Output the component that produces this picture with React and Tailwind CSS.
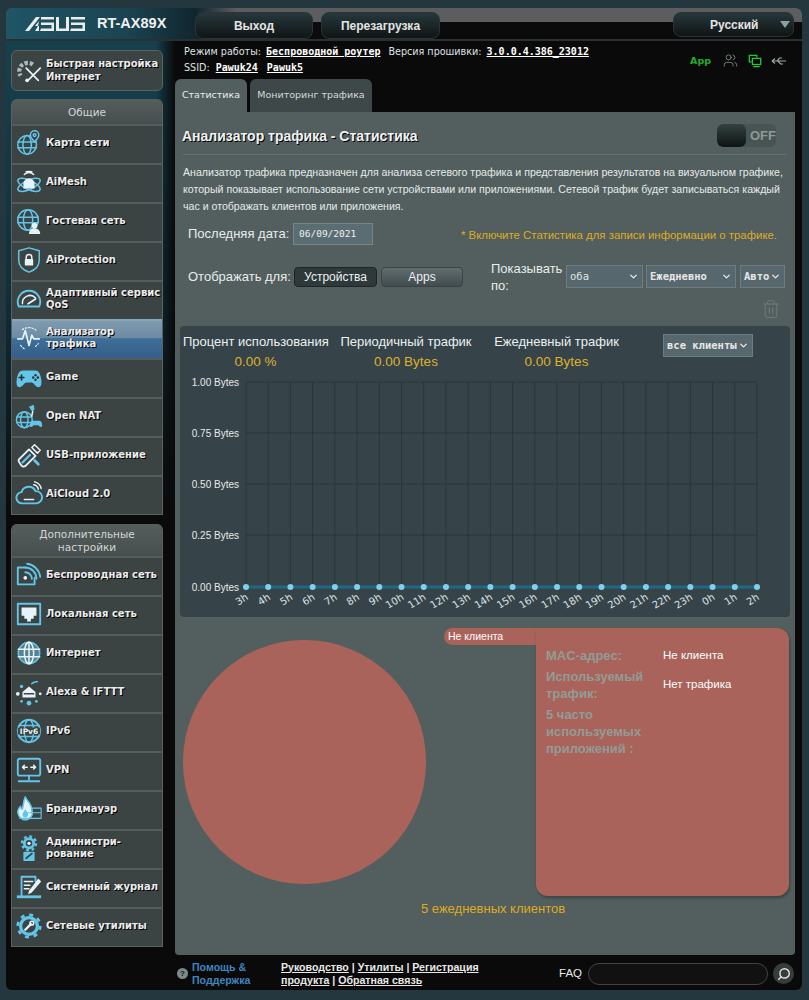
import { ChevronDown, Search, Trash2, Users } from 'lucide-react';

const B = '#62c6ea';
const W = '#e6f4f9';

function Ic({ children }) {
  return (
    <svg viewBox="0 0 30 30" className="h-[28px] w-[28px] shrink-0" fill="none" stroke={B} strokeWidth="1.6" strokeLinecap="round" strokeLinejoin="round">
      {children}
    </svg>
  );
}

const icons = {
  wizard: (
    <Ic>
      <path d="M19 8A9 9 0 0 0 6 20" stroke="#a9bcc4" strokeWidth="4.500" strokeDasharray="3.500 2" strokeLinecap="butt" />
      <path d="M12 12l13 13" stroke={W} strokeWidth="1.800" />
      <path d="M27 12L15 24" stroke={W} strokeWidth="1.800" />
      <circle cx="13" cy="25" r="2" fill={W} stroke="none" />
    </Ic>
  ),
  map: (
    <Ic>
      <circle cx="13" cy="17" r="10" />
      <ellipse cx="13" cy="17" rx="4.5" ry="10" />
      <path d="M3 14h20M3 20h20" />
      <path d="M21 2a4.5 4.5 0 0 1 4.500 4.500c0 3-4.500 7-4.500 7s-4.500-4-4.500-7A4.500 4.500 0 0 1 21 2z" fill="#3c4343" />
      <circle cx="21" cy="6.500" r="1.500" />
    </Ic>
  ),
  mesh: (
    <Ic>
      <ellipse cx="15" cy="18" rx="13" ry="5" transform="rotate(25 15 18)" />
      <ellipse cx="15" cy="18" rx="13" ry="5" transform="rotate(-25 15 18)" />
      <path d="M9 22v-5a6 6 0 0 1 12 0v5z" fill={W} stroke="none" />
      <path d="M10 7a7 7 0 0 1 10 0M12 4a10 6 0 0 1 6 0" stroke={W} />
    </Ic>
  ),
  guest: (
    <Ic>
      <circle cx="14" cy="14" r="11" />
      <ellipse cx="14" cy="14" rx="5" ry="11" />
      <path d="M3 11h22M3 17h22" />
      <circle cx="21" cy="20" r="3" fill={W} stroke="none" />
      <path d="M15 29c0-4 2-6 6-6s6 2 6 6z" fill={W} stroke="none" />
    </Ic>
  ),
  shield: (
    <Ic>
      <path d="M15 2l11 3v10c0 7-5 11-11 13C9 26 4 22 4 15V5z" />
      <rect x="10.500" y="14" width="9" height="7" rx="1" fill={W} stroke="none" />
      <path d="M12 14v-2a3 3 0 0 1 6 0v2" stroke={W} />
    </Ic>
  ),
  qos: (
    <Ic>
      <path d="M4 23a12 12 0 1 1 22 0z" strokeWidth="2" />
      <path d="M8 20a8 8 0 0 1 14-6" stroke={W} />
      <path d="M14 20l8-5" stroke={W} strokeWidth="2" />
    </Ic>
  ),
  traffic: (
    <Ic>
      <path d="M3 16h5l3-9 4 16 3-11 2 4h6" stroke={W} strokeWidth="1.800" />
      <path d="M8 6a12 12 0 0 1 15 1M6 23a12 12 0 0 0 5 4M22 24l3-3" stroke={W} strokeWidth="1.300" strokeDasharray="1.500 2" />
    </Ic>
  ),
  game: (
    <Ic>
      <path d="M8 8h14c3 0 5 3 6 9s0 9-3 9-4-4-7-5h-6c-3 1-4 5-7 5s-4-3-3-9 3-9 6-9z" fill={B} stroke="none" />
      <path d="M7 13v5M4.500 15.500h5" stroke="#2b3232" strokeWidth="1.800" />
      <circle cx="22" cy="13" r="1.300" fill="#2b3232" stroke="none" />
      <circle cx="22" cy="18" r="1.300" fill="#2b3232" stroke="none" />
      <circle cx="19.500" cy="15.500" r="1.300" fill="#2b3232" stroke="none" />
      <circle cx="24.500" cy="15.500" r="1.300" fill="#2b3232" stroke="none" />
    </Ic>
  ),
  nat: (
    <Ic>
      <circle cx="10" cy="19" r="8.500" />
      <ellipse cx="10" cy="19" rx="4" ry="8.500" />
      <path d="M2 16h16M2 22h16" />
      <path d="M15 5l5-2 1 5-3 2z" fill={B} stroke="none" />
      <path d="M19 10l-1 5" stroke={W} />
      <path d="M19 20h7c2 0 3 2 3 5s-2 2-4 0h-5c-2 2-4 3-4 0s1-5 3-5z" fill={B} stroke="none" />
    </Ic>
  ),
  usb: (
    <Ic>
      <path d="M4 20L15 9l7 7-11 11c-2 1-4 0-5-2s-3-3-2-5z" stroke={W} strokeWidth="2" />
      <path d="M8 23l8-8" stroke={B} strokeWidth="2.500" />
      <path d="M18 7l3-3 6 6-3 3z" stroke={W} />
      <path d="M21 21l4 4" stroke={B} strokeWidth="3" />
    </Ic>
  ),
  cloud: (
    <Ic>
      <path d="M8 25a6 6 0 0 1-1-12 8 8 0 0 1 15-1 6.500 6.500 0 0 1 1 13z" strokeWidth="2" />
      <path d="M20 5a6 6 0 0 1 5 5M21 2a9 9 0 0 1 7 7" stroke={W} />
      <path d="M10 21h10" stroke={W} strokeDasharray="2 1" />
    </Ic>
  ),
  wifi: (
    <Ic>
      <path d="M11 7H3v18h18v-7" strokeWidth="2" />
      <circle cx="11" cy="18" r="2" fill={W} stroke="none" />
      <path d="M11 12a7 7 0 0 1 7 7M11 7a12 12 0 0 1 12 12M13 3a16 16 0 0 1 14 14" strokeWidth="2" />
    </Ic>
  ),
  lan: (
    <Ic>
      <rect x="3" y="4" width="24" height="22" strokeWidth="2" />
      <path d="M7 8h16v9h-3v3h-3v3h-4v-3h-3v-3H7z" fill={W} stroke="none" />
    </Ic>
  ),
  net: (
    <Ic>
      <circle cx="15" cy="15" r="11.500" fill="#58808f" />
      <ellipse cx="15" cy="15" rx="5" ry="11.500" stroke={W} />
      <path d="M3.500 11h23M3.500 19h23M15 3.500v23" stroke={W} />
    </Ic>
  ),
  alexa: (
    <Ic>
      <path d="M8 15l7-6 7 6v6H8z" fill={W} stroke="none" />
      <path d="M10 17h10" stroke="#3c4343" />
      <path d="M18 6a8 8 0 0 1 6-2" />
      <circle cx="3" cy="17" r="2" fill={W} stroke="none" />
      <circle cx="27" cy="17" r="1.500" fill={W} stroke="none" />
      <circle cx="15" cy="27" r="2.500" fill={B} stroke="none" />
      <circle cx="7" cy="9" r="1.800" fill={B} stroke="none" />
      <circle cx="7" cy="25" r="1.500" fill={B} stroke="none" />
      <circle cx="23" cy="25" r="1.500" fill={B} stroke="none" />
    </Ic>
  ),
  ipv6: (
    <Ic>
      <circle cx="15" cy="15" r="12" strokeWidth="2" />
      <ellipse cx="15" cy="15" rx="5" ry="12" />
      <path d="M4 9h22M4 21h22" />
      <rect x="3" y="11.500" width="24" height="7" fill="#3c4343" stroke="none" />
      <text x="15" y="18" textAnchor="middle" fontSize="8" fontWeight="700" fill={W} stroke="none" fontFamily="DejaVu Sans">IPv6</text>
    </Ic>
  ),
  vpn: (
    <Ic>
      <rect x="3" y="3" width="24" height="18" rx="2" strokeWidth="2" />
      <path d="M8 12h5M8 12l2-2M8 12l2 2M22 12h-5M22 12l-2-2M22 12l-2 2" stroke={W} />
      <path d="M15 21v4M4 27h22" strokeWidth="2" />
    </Ic>
  ),
  fire: (
    <Ic>
      <path d="M11 2c1 4 7 7 7 14a7 7 0 0 1-14 6c-2-4 0-8 2-10 0 2 1 3 2 3 1-4 1-9 3-13z" fill={W} stroke={B} />
      <path d="M11 15c2 3 3 4 3 6a3 3 0 0 1-6 0c0-2 2-3 3-6z" fill={B} stroke="none" />
      <path d="M18 14h10v5H18zM14 19h14v6H5" strokeWidth="1.200" />
    </Ic>
  ),
  admin: (
    <Ic>
      <circle cx="15" cy="10" r="7.500" strokeWidth="2.500" strokeDasharray="3 2.900" strokeLinecap="butt" />
      <circle cx="15" cy="10" r="5" strokeWidth="3" />
      <circle cx="15" cy="10" r="1.800" fill={W} stroke="none" />
      <rect x="9" y="19" width="12" height="10" rx="1" fill={B} stroke="none" />
      <path d="M12 26l6-5" stroke="#3c4343" strokeWidth="2" />
    </Ic>
  ),
  log: (
    <Ic>
      <path d="M7 4h15M7 4v20M22 4v5" strokeWidth="2" />
      <path d="M10 9h9M10 13h6M10 17h5" stroke={W} />
      <path d="M25 6L15 19l-1 4 4-2L28 9z" fill={W} stroke="none" />
      <path d="M2 24h26v3H2z" fill={B} stroke="none" />
    </Ic>
  ),
  tools: (
    <Ic>
      <circle cx="15" cy="15" r="12" strokeWidth="3" strokeDasharray="4.200 5.200" strokeLinecap="butt" />
      <circle cx="15" cy="15" r="9" strokeWidth="3.500" />
      <path d="M11 19l6-6" stroke={W} strokeWidth="2.500" />
      <circle cx="18" cy="12" r="2" stroke={W} />
    </Ic>
  ),
};

function NavItem({ icon, label, active }) {
  return (
    <div className={`flex h-[39px] items-center gap-[3px] border-t-2 pb-[3px] pl-[3px] ${active ? 'border-[#8aa3b5] bg-[linear-gradient(#7f9bb0,#6d8ba3_45%,#3f6e98_48%,#335f8a)]' : 'border-[#555c5c] bg-[#3c4343]'}`}>
      {icons[icon]}
      <span className="font-['DejaVu_Sans'] text-[10px] leading-[12.500px] font-bold text-[#ececec] [text-shadow:1px_1px_0_#000]">{label}</span>
    </div>
  );
}

function NavGroup({ title, items, tall }) {
  return (
    <div className="overflow-hidden rounded-t-md border-x border-b border-[#5a6161] bg-[#3c4343]">
      <div className={`flex items-center justify-center bg-[linear-gradient(#565d5d,#474e4e)] pt-[2px] text-center font-['DejaVu_Sans'] text-[10.500px] leading-[13px] text-[#d2d6d6] ${tall ? 'h-[32px]' : 'h-[25px]'}`}>
        {title}
      </div>
      {items.map(it => <NavItem key={it.label} {...it} />)}
    </div>
  );
}

const general = [
  { icon: 'map', label: 'Карта сети' },
  { icon: 'mesh', label: 'AiMesh' },
  { icon: 'guest', label: 'Гостевая сеть' },
  { icon: 'shield', label: 'AiProtection' },
  { icon: 'qos', label: 'Адаптивный сервис QoS' },
  { icon: 'traffic', label: 'Анализатор трафика', active: true },
  { icon: 'game', label: 'Game' },
  { icon: 'nat', label: 'Open NAT' },
  { icon: 'usb', label: 'USB-приложение' },
  { icon: 'cloud', label: 'AiCloud 2.0' },
];

const advanced = [
  { icon: 'wifi', label: 'Беспроводная сеть' },
  { icon: 'lan', label: 'Локальная сеть' },
  { icon: 'net', label: 'Интернет' },
  { icon: 'alexa', label: 'Alexa & IFTTT' },
  { icon: 'ipv6', label: 'IPv6' },
  { icon: 'vpn', label: 'VPN' },
  { icon: 'fire', label: 'Брандмауэр' },
  { icon: 'admin', label: 'Администри-рование' },
  { icon: 'log', label: 'Системный журнал' },
  { icon: 'tools', label: 'Сетевые утилиты' },
];

function HeadBtn({ children, className }) {
  return (
    <div className={`flex items-center justify-center rounded-lg border border-[#2a3336] bg-[linear-gradient(#27383c,#101414)] text-[12px] font-bold text-[#e4e4e4] ${className}`}>
      {children}
    </div>
  );
}

function Sel({ label, className, bold }) {
  return (
    <div className={`flex h-[23px] items-center justify-between border border-[#6d7d80] bg-[#56686d] pr-[3px] pl-[3px] font-['DejaVu_Sans_Mono'] text-[10.500px] text-[#e6e6e6] ${bold ? 'font-bold' : ''} ${className}`}>
      {label}
      <ChevronDown size={11} strokeWidth={3} color="#e6e6e6" />
    </div>
  );
}

const hours = ['3h', '4h', '5h', '6h', '7h', '8h', '9h', '10h', '11h', '12h', '13h', '14h', '15h', '16h', '17h', '18h', '19h', '20h', '21h', '22h', '23h', '0h', '1h', '2h'];
const yLabels = [
  ['1.00 Bytes', 12],
  ['0.75 Bytes', 63],
  ['0.50 Bytes', 114],
  ['0.25 Bytes', 165],
  ['0.00 Bytes', 217],
];

function Chart() {
  const x0 = 66;
  const step = 511 / 23;
  return (
    <svg width="610" height="247" className="block">
      {yLabels.map(([t, y]) => (
        <g key={t}>
          <line x1={x0} x2={x0 + 511} y1={y} y2={y} stroke="#2a353a" />
          <text x="59" y={y + 3.500} textAnchor="end" fontSize="10" fontFamily="Liberation Sans" fill="#e8e8e8">{t}</text>
        </g>
      ))}
      {hours.map((h, i) => (
        <g key={h}>
          <line x1={x0 + i * step} x2={x0 + i * step} y1="12" y2="217" stroke="#2a353a" />
          <text transform={`translate(${x0 + i * step + 3} 229) rotate(-32)`} textAnchor="end" fontSize="10" fontFamily="DejaVu Sans" fill="#dfe3e3">{h}</text>
        </g>
      ))}
      <line x1={x0} x2={x0 + 511} y1="217" y2="217" stroke="#1f6a82" strokeWidth="3" />
      {hours.map((h, i) => <circle key={h} cx={x0 + i * step} cy="217" r="3" fill="#7ed0ee" />)}
    </svg>
  );
}

function Stat({ label, value, className }) {
  return (
    <div className={`text-center ${className}`}>
      <div className="text-[13px] leading-[16px] whitespace-nowrap text-[#eaf0f0]">{label}</div>
      <div className="mt-[4px] text-[13.500px] leading-[16px] text-[#dfb12a]">{value}</div>
    </div>
  );
}

export default function App() {
  return (
    <div className="h-[1000px] overflow-hidden bg-[#24363e] pt-[8px] pl-[6px] font-['Liberation_Sans',sans-serif]">
      <div className="h-[982px] w-[796px] overflow-hidden rounded-md bg-[#0a0a0a]">
        {/* header */}
        <div className="flex h-[33px] items-start border-b-2 border-[#2a2f31] bg-[linear-gradient(90deg,#1f5566,#1b4451_120px,#10262e_190px,transparent_230px),linear-gradient(#5b5d5e_14px,#0b0b0b_14px)]">
          <div className="flex w-[189px] items-center pt-[5px] pl-[19px]">
            <svg width="60" height="14" viewBox="0 0 60 14" fill="#ececec">
              <path d="M0 14L11 0h4L4 14zM14 4l-4 5h4v5h-4l3-5z" />
              <path d="M16 0h13v2.500H16zM16 5.500h13v8.500H15l1-2.500h10.500v-3.500H16zM31 0h3v14h-3zM31 11.500h13V14H31zM41 0h3v14h-3zM46 0h14v2.500H46zM46 5.500h14V14H45l1-2.500h11.500V8H46z" />
            </svg>
            <span className="ml-[12px] text-[14.500px] font-bold whitespace-nowrap text-[#f0f0f0]">RT-AX89X</span>
          </div>
          <HeadBtn className="mt-[4px] h-[27px] w-[118px]">Выход</HeadBtn>
          <HeadBtn className="mt-[4px] ml-[8px] h-[27px] w-[119px]">Перезагрузка</HeadBtn>
          <div className="mt-[4px] ml-[233px] flex h-[25px] w-[121px] items-center justify-between rounded-lg border border-[#2a3336] bg-[linear-gradient(#27383c,#101414)] pr-[3px] pl-[36px] text-[12px] font-bold text-[#e4e4e4]">
            Русский
            <span className="h-0 w-0 border-x-[5px] border-t-[7px] border-x-transparent border-t-[#8aa0a8]" />
          </div>
        </div>

        <div className="flex">
          {/* sidebar */}
          <div className="w-[169px] shrink-0 bg-[linear-gradient(90deg,transparent_150px,#0a0a0a_169px),linear-gradient(#17404d,#10303b_250px,#0a0a0a_480px)] pt-[9px] pl-[5px]">
            <div className="flex h-[41px] w-[152px] items-center gap-[3px] rounded-md border border-[#5a6161] bg-[#3c4343] pl-[3px]">
              {icons.wizard}
              <span className="font-['DejaVu_Sans'] text-[10px] leading-[12.500px] font-bold text-[#ececec] [text-shadow:1px_1px_0_#000]">Быстрая настройка Интернет</span>
            </div>
            <div className="mt-[8px] w-[152px]">
              <NavGroup title="Общие" items={general} />
            </div>
            <div className="mt-[9px] w-[152px]">
              <NavGroup title="Дополнительные настройки" items={advanced} tall />
            </div>
          </div>

          {/* main */}
          <div className="w-[620px] shrink-0">
            <div className="flex h-[38px] justify-between pt-[3px] pl-[9px] font-['DejaVu_Sans'] text-[9.600px] leading-[16px] text-[#dfe3e3]">
              <div>
                <div className="whitespace-nowrap">
                  Режим работы: <span className="ml-[2px] font-['DejaVu_Sans_Mono'] text-[10px] font-bold text-white underline">Беспроводной роутер</span>
                  <span className="ml-[8px]">Версия прошивки: </span><span className="ml-[2px] font-['DejaVu_Sans_Mono'] text-[10px] font-bold text-white underline">3.0.0.4.386_23012</span>
                </div>
                <div className="whitespace-nowrap">
                  SSID: <span className="ml-[3px] font-['DejaVu_Sans_Mono'] text-[10px] font-bold text-white underline">Pawuk24</span>
                  <span className="ml-[9px] font-['DejaVu_Sans_Mono'] text-[10px] font-bold text-white underline">Pawuk5</span>
                </div>
              </div>
              <div className="flex items-center pr-[8px] pb-[2px]">
                <span className="text-[9.500px] font-bold text-[#1fae2e]">App</span>
                <Users size={15} strokeWidth={1.300} color="#8a9494" className="ml-[12px]" />
                <svg width="14" height="16" viewBox="0 0 16 16" fill="none" stroke="#23c53a" strokeWidth="1.500" className="ml-[10px]">
                  <path d="M4 9H1.500V1.500H10V4" />
                  <rect x="5" y="5" width="9.500" height="7" />
                  <path d="M6 14.500h7.500" />
                </svg>
                <svg width="16" height="16" viewBox="0 0 16 16" fill="none" stroke="#9aa4a4" strokeWidth="1.200" className="ml-[9px]">
                  <path d="M1 8h14M1 8l3-2.500M1 8l3 2.500M6 8l2.500-3H11M7 8l2.500 3H12" />
                </svg>
              </div>
            </div>

            {/* tabs */}
            <div className="flex h-[33px] gap-[3px] font-['DejaVu_Sans'] text-[9.500px]">
              <div className="flex w-[72px] items-center justify-center rounded-t-md bg-[#525f5e] text-[#e8ecec]">Статистика</div>
              <div className="flex w-[122px] items-center justify-center rounded-t-md bg-[#3e4848] text-[#d4d9d9]">Мониторинг трафика</div>
            </div>

            {/* panel */}
            <div className="h-[843px] rounded-b-sm bg-[#525f5e] px-[8px]">
              <div className="flex h-[43px] items-center justify-between border-b border-[#667271] pt-[5px] pr-[11px]">
                <span className="mt-[2px] -ml-[1px] text-[14px] font-bold text-[#f2f2f2] [text-shadow:1px_1px_0_#000]">Анализатор трафика - Статистика</span>
                <div className="flex h-[23px] w-[59px] overflow-hidden rounded-md bg-[#485453]">
                  <div className="h-full w-[29px] rounded-md bg-[linear-gradient(#33423f,#0e1414)]" />
                  <span className="ml-[4px] self-center text-[13px] font-bold text-[#8d9a9a]">OFF</span>
                </div>
              </div>

              <p className="pt-[9px] text-[10.600px] leading-[17px] text-[#e6eaea]">
                Анализатор трафика предназначен для анализа сетевого трафика и представления результатов на визуальном графике, который показывает использование сети устройствами или приложениями. Сетевой трафик будет записываться каждый час и отображать клиентов или приложения.
              </p>

              <div className="mt-[8px] flex h-[22px] items-center pl-[5px]">
                <span className="w-[100px] text-[13px] whitespace-nowrap text-[#e8ecec]">Последняя дата:</span>
                <div className="ml-[5px] flex h-[22px] w-[80px] items-center border border-[#75868a] bg-[#5a6d72] pl-[5px] font-['DejaVu_Sans_Mono'] text-[9.500px] text-[#eef0f0]">06/09/2021</div>
                <span className="mt-[4px] ml-auto pr-[10px] text-[11.400px] text-[#dfab1e]">* Включите Статистика для записи информации о трафике.</span>
              </div>

              <div className="mt-[20px] flex h-[23px] items-center pl-[5px]">
                <span className="w-[102px] text-[13px] whitespace-nowrap text-[#e8ecec]">Отображать для:</span>
                <div className="ml-[4px] flex h-[20px] w-[83px] items-center justify-center rounded border border-[#222] bg-[#2e393c] text-[12px] text-[#eef0f0]">Устройства</div>
                <div className="ml-[4px] flex h-[20px] w-[82px] items-center justify-center rounded border border-[#3a4446] bg-[linear-gradient(#616d6f,#424c4f)] text-[12px] text-[#eef0f0]">Apps</div>
                <span className="ml-[28px] w-[75px] text-[13px] leading-[17px] text-[#e8ecec]">Показывать по:</span>
                <Sel label="оба" className="w-[77px]" />
                <Sel label="Ежедневно" className="ml-[3px] w-[90px]" bold />
                <Sel label="Авто" className="ml-[4px] w-[45px]" bold />
              </div>

              <div className="mt-[11px] flex justify-end pr-[6px]">
                <Trash2 size={20} strokeWidth={1.200} color="#6f7c7c" />
              </div>

              {/* chart card */}
              <div className="mt-[7px] -ml-[3px] h-[291px] w-[610px] rounded-sm bg-[#36444a]">
                <div className="flex h-[44px] items-start pt-[8px] pl-[3px]">
                  <Stat label="Процент использования" value="0.00 %" className="w-[145px]" />
                  <Stat label="Периодичный трафик" value="0.00 Bytes" className="ml-[12px] w-[132px]" />
                  <Stat label="Ежедневный трафик" value="0.00 Bytes" className="ml-[22px] w-[125px]" />
                  <Sel label="все клиенты" className="ml-[44px] w-[90px]" bold />
                </div>
                <Chart />
              </div>

              {/* client breakdown */}
              <div className="mt-[11px] flex h-[268px] items-start">
                <div className="mt-[12px] h-[244px] w-[243px] shrink-0 rounded-full bg-[#a9635a]" />
                <div className="ml-[18px] flex h-[17px] w-[92px] shrink-0 items-center rounded-l-full bg-[#a9635a] pl-[4px] text-[10.500px] text-white">Не клиента</div>
                <div className="grid h-[268px] w-[253px] shrink-0 grid-cols-[117px_1fr] content-start rounded-r-xl rounded-b-xl bg-[#a9635a] pt-[19px] pl-[10px] shadow-[1px_2px_3px_rgba(0,0,0,0.3)]">
                  <div className="text-[13px] leading-[17px] font-bold text-[#929c96]">MAC-адрес:</div>
                  <div className="text-[11.500px] leading-[17px] text-white">Не клиента</div>
                  <div className="mt-[4px] text-[13px] leading-[17px] font-bold text-[#929c96]">Используемый трафик:</div>
                  <div className="mt-[12px] text-[11.500px] leading-[17px] text-white">Нет трафика</div>
                  <div className="col-span-2 mt-[4px] w-[110px] text-[13px] leading-[17px] font-bold text-[#929c96]">5 часто используемых приложений :</div>
                </div>
              </div>
              <div className="mt-[4px] pl-[238px] text-[13px] leading-[18px] text-[#dfab1e]">5 ежедневных клиентов</div>
            </div>

            {/* footer */}
            <div className="flex h-[35px] items-center pt-[2px]">
              <span className="ml-[2px] flex h-[11px] w-[11px] items-center justify-center rounded-full bg-[#7d8a8a] text-[8px] font-bold text-[#111]">?</span>
              <span className="ml-[4px] w-[89px] text-[10.600px] leading-[13px] font-bold text-[#3f86c0]">Помощь & Поддержка</span>
              <div className="w-[200px] text-[10.600px] leading-[13px] font-bold text-[#e8e8e8]">
                <div>
                  <span className="underline">Руководство</span> | <span className="underline">Утилиты</span> | <span className="underline">Регистрация</span>
                </div>
                <div>
                  <span className="underline">продукта</span> | <span className="underline">Обратная связь</span>
                </div>
              </div>
              <span className="ml-[78px] text-[11.500px] text-[#e8e8e8]">FAQ</span>
              <div className="ml-[6px] h-[22px] w-[180px] rounded-full border border-[#3f4444] bg-[#111]" />
              <div className="ml-[5px] flex h-[21px] w-[21px] items-center justify-center rounded-full bg-[#363b3b]">
                <Search size={14} strokeWidth={2.500} color="#e0e0e0" className="-scale-x-100" />
              </div>
            </div>
          </div>
        </div>
      </div>
    </div>
  );
}
